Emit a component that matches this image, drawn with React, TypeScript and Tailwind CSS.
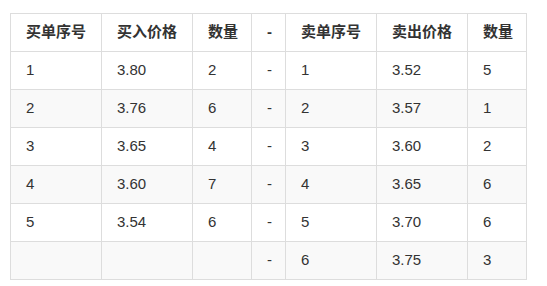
import React from "react";

const buy = [
  ["1", "3.80", "2"],
  ["2", "3.76", "6"],
  ["3", "3.65", "4"],
  ["4", "3.60", "7"],
  ["5", "3.54", "6"],
  ["", "", ""],
];
const sell = [
  ["1", "3.52", "5"],
  ["2", "3.57", "1"],
  ["3", "3.60", "2"],
  ["4", "3.65", "6"],
  ["5", "3.70", "6"],
  ["6", "3.75", "3"],
];

const widths = ["w-[91px]", "w-[91px]", "w-[59px]", "w-[34px]", "w-[91px]", "w-[91px]", "w-[59px]"];

export default function App() {
  const headers = ["买单序号", "买入价格", "数量", "-", "卖单序号", "卖出价格", "数量"];
  return (
    <div className="w-[547px] h-[286px] bg-white pt-[13px] pl-[10px] text-[#333] text-[15px]" style={{ fontFamily: '"Liberation Sans", "Noto Sans CJK SC", sans-serif' }}>
      <table className="border-collapse table-fixed w-[517px]">
        <colgroup>
          {widths.map((w, i) => (
            <col key={i} className={w} />
          ))}
        </colgroup>
        <thead>
          <tr className="h-[38px]">
            {headers.map((h, i) => (
              <th key={i} className="border border-[#dddddd] pl-[15px] pr-0 py-0 text-left font-bold align-middle">
                {h}
              </th>
            ))}
          </tr>
        </thead>
        <tbody>
          {buy.map((b, i) => {
            const cells = [...b, "-", ...sell[i]];
            return (
              <tr key={i} className={`h-[38px] ${i % 2 === 1 ? "bg-[#f9f9f9]" : "bg-white"}`}>
                {cells.map((c, j) => (
                  <td key={j} className="border border-[#dddddd] pl-[15px] pr-0 py-0 text-left align-middle">
                    {c}
                  </td>
                ))}
              </tr>
            );
          })}
        </tbody>
      </table>
    </div>
  );
}
